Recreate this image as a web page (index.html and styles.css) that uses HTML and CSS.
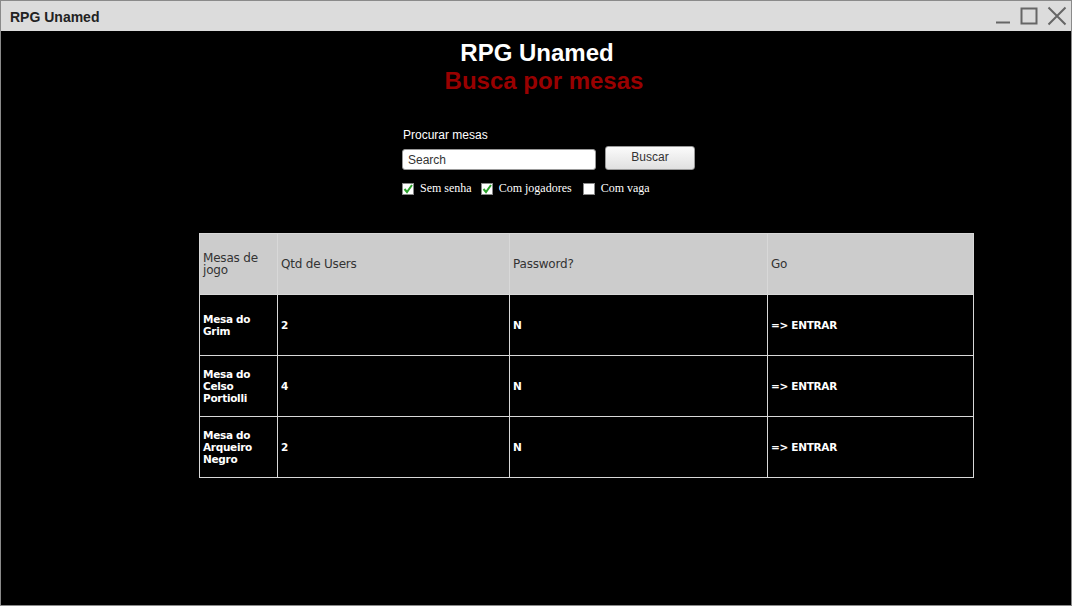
FILE: index.html
```html
<!DOCTYPE html>
<html>
<head>
<meta charset="utf-8">
<link rel="stylesheet" href="styles.css">
</head>
<body>
<div class="window">
  <div class="titlebar">
    <span class="wtitle">RPG Unamed</span>
    <div class="controls">
      <svg width="16" height="18" viewBox="0 0 16 18"><path d="M1 15.5H15" stroke="#666" stroke-width="2"/></svg>
      <svg width="18" height="18" viewBox="0 0 18 18"><rect x="1.5" y="1.5" width="15" height="15" fill="none" stroke="#666" stroke-width="2"/></svg>
      <svg width="20" height="20" viewBox="0 0 20 20"><path d="M1.5 1.5L18.5 18.5M18.5 1.5L1.5 18.5" stroke="#666" stroke-width="2"/></svg>
    </div>
  </div>
  <div class="content">
    <h1 class="title">RPG Unamed</h1>
    <h2 class="subtitle">Busca por mesas</h2>
    <div class="search">
      <div class="label">Procurar mesas</div>
      <div class="searchrow">
        <div class="input">Search</div>
        <div class="button">Buscar</div>
      </div>
      <div class="checks">
        <span class="check on"><svg width="12" height="12" viewBox="0 0 12 12"><path d="M2.5 6L5 9L10 2" fill="none" stroke="#2aa02a" stroke-width="2"/></svg></span><span class="clabel">Sem senha</span>
        <span class="check on"><svg width="12" height="12" viewBox="0 0 12 12"><path d="M2.5 6L5 9L10 2" fill="none" stroke="#2aa02a" stroke-width="2"/></svg></span><span class="clabel">Com jogadores</span>
        <span class="check gap"></span><span class="clabel">Com vaga</span>
      </div>
    </div>
    <table class="grid">
      <tr class="head">
        <td class="c1">Mesas de<br>jogo</td>
        <td class="c2">Qtd de Users</td>
        <td class="c3">Password?</td>
        <td class="c4">Go</td>
      </tr>
      <tr>
        <td>Mesa do<br>Grim</td>
        <td>2</td>
        <td>N</td>
        <td>=&gt; ENTRAR</td>
      </tr>
      <tr>
        <td>Mesa do<br>Celso<br>Portiolli</td>
        <td>4</td>
        <td>N</td>
        <td>=&gt; ENTRAR</td>
      </tr>
      <tr>
        <td>Mesa do<br>Arqueiro<br>Negro</td>
        <td>2</td>
        <td>N</td>
        <td>=&gt; ENTRAR</td>
      </tr>
    </table>
  </div>
</div>
</body>
</html>
```
FILE: styles.css
```css
html, body {
  margin: 0;
  padding: 0;
  background: #000;
}
.window {
  width: 1072px;
  height: 606px;
  box-sizing: border-box;
  border: 1px solid #8a8a8a;
  background: #000;
  display: flex;
  flex-direction: column;
}
.titlebar {
  height: 30px;
  background: #dcdcdc;
  display: flex;
  align-items: center;
  justify-content: space-between;
  padding: 0 4px 0 9px;
  box-sizing: border-box;
  flex: none;
}
.wtitle {
  font-family: "Liberation Sans", Arial, sans-serif;
  font-weight: bold;
  font-size: 14px;
  color: #222;
  margin-top: 2px;
}
.controls {
  display: flex;
  align-items: center;
  gap: 9px;
}
.content {
  flex: 1;
  display: flex;
  flex-direction: column;
  align-items: center;
}
.title {
  margin: 8px 0 0 0;
  font-family: "Liberation Sans", Arial, sans-serif;
  font-size: 24px;
  font-weight: bold;
  color: #fff;
  line-height: 28px;
  transform: translateX(1px);
}
.subtitle {
  margin: 0;
  font-family: "Liberation Sans", Arial, sans-serif;
  font-size: 24px;
  font-weight: bold;
  color: #990000;
  line-height: 28px;
  transform: translateX(8px);
}
.search {
  margin-top: 33px;
  width: 294px;
  align-self: flex-start;
  margin-left: 401px;
  display: flex;
  flex-direction: column;
}
.label {
  font-family: "Liberation Sans", Arial, sans-serif;
  font-size: 12px;
  color: #fff;
  padding-left: 1px;
  line-height: 14px;
}
.searchrow {
  display: flex;
  align-items: flex-start;
  gap: 9px;
}
.input {
  margin-top: 7px;
  width: 194px;
  height: 21px;
  box-sizing: border-box;
  background: #fff;
  border: 1px solid #999;
  border-radius: 3px;
  font-family: "Liberation Sans", Arial, sans-serif;
  font-size: 12px;
  color: #333;
  padding: 3px 0 0 5px;
}
.button {
  margin-top: 4px;
  width: 90px;
  height: 24px;
  box-sizing: border-box;
  background: linear-gradient(#fbfbfb, #e0e0e0);
  border: 1px solid #999;
  border-radius: 3px;
  font-family: "Liberation Sans", Arial, sans-serif;
  font-size: 12px;
  color: #333;
  text-align: center;
  line-height: 21px;
}
.checks {
  display: flex;
  align-items: center;
  margin-top: 11px;
  font-family: "Liberation Serif", "Times New Roman", serif;
  font-size: 12px;
  color: #fff;
}
.check {
  width: 12px;
  height: 12px;
  background: #fff;
  box-sizing: border-box;
  border: 1px solid #888;
  display: inline-flex;
  margin-right: 6px;
}
.check svg { display: block; margin: -1px; }
.clabel { margin-right: 9px; }
.check.gap { margin-left: 2px; }
.grid {
  align-self: flex-start;
  margin-top: 37px;
  margin-left: 198px;
  border-collapse: collapse;
  border: 1px solid #e6e6e6;
  font-family: "Comic Sans MS", "DejaVu Sans", sans-serif;
  font-size: 10.5px;
}
.grid td {
  border: 1px solid #d8d8d8;
  padding: 0 3px;
  height: 61px;
  box-sizing: border-box;
  color: #fff;
  font-weight: bold;
  line-height: 12px;
  vertical-align: middle;
  letter-spacing: -0.3px;
}
.grid .head td {
  background: #cccccc;
  color: #333;
  font-weight: normal;
  font-size: 12px;
  height: 61px;
  letter-spacing: -0.2px;
}
.c1 { width: 78px; }
.c2 { width: 232px; }
.c3 { width: 258px; }
.c4 { width: 206px; }
```
